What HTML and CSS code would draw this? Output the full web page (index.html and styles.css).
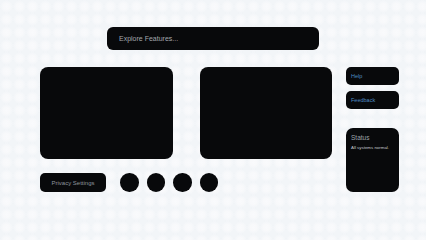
FILE: index.html
```html
<!DOCTYPE html>
<html>
<head>
<meta charset="utf-8">
<link rel="stylesheet" href="styles.css">
</head>
<body>
<div class="page">
  <div class="search">Explore Features...</div>
  <div class="main">
    <div class="content">
      <div class="panels">
        <div class="panel p1"></div>
        <div class="panel p2"></div>
      </div>
      <div class="controls">
        <div class="privacy">Privacy Settings</div>
        <div class="dots">
          <span class="dot"></span>
          <span class="dot"></span>
          <span class="dot"></span>
          <span class="dot"></span>
        </div>
      </div>
    </div>
    <div class="side">
      <div class="link">Help</div>
      <div class="link">Feedback</div>
      <div class="status">
        <div class="status-title">Status</div>
        <div class="status-text">All systems normal.</div>
      </div>
    </div>
  </div>
</div>
</body>
</html>
```
FILE: styles.css
```css
html, body {
  margin: 0;
  padding: 0;
}
body {
  width: 426px;
  height: 240px;
  overflow: hidden;
  font-family: "Liberation Sans", Arial, sans-serif;
  background-color: #f2f5f8;
  background-image: radial-gradient(circle at center, #f9fafc 0, #f8f9fb 30%, rgba(242,245,248,0) 70%);
  background-size: 13px 13px;
}
.page {
  display: flex;
  flex-direction: column;
  padding-top: 27px;
}
.search {
  align-self: center;
  width: 200px;
  height: 23px;
  padding-left: 12px;
  background: #08090b;
  border-radius: 6px;
  color: #a3a7ad;
  font-size: 7px;
  display: flex;
  align-items: center;
}
.main {
  display: flex;
  gap: 14px;
  padding-left: 40px;
  margin-top: 17px;
}
.content {
  display: flex;
  flex-direction: column;
  gap: 14px;
}
.panels {
  display: flex;
  gap: 27px;
}
.panel {
  height: 92px;
  background: #08090b;
  border-radius: 8px;
}
.p1 { width: 133px; }
.p2 { width: 132px; }
.controls {
  display: flex;
  align-items: center;
  gap: 14px;
}
.privacy {
  width: 66px;
  height: 19px;
  border-radius: 5px;
  background: #08090b;
  color: #8d949c;
  font-size: 6px;
  display: flex;
  align-items: center;
  justify-content: center;
}
.dots {
  display: flex;
  gap: 8px;
}
.dot {
  width: 18.5px;
  height: 18.5px;
  border-radius: 50%;
  background: #08090b;
}
.side {
  width: 53px;
  display: flex;
  flex-direction: column;
}
.link {
  height: 18px;
  border-radius: 5px;
  background: #08090b;
  color: #4e8cc2;
  font-size: 5.5px;
  padding-left: 5px;
  display: flex;
  align-items: center;
  margin-bottom: 6px;
}
.status {
  margin-top: 13px;
  height: 64px;
  border-radius: 7px;
  background: #08090b;
  padding: 6px 5px;
  box-sizing: border-box;
}
.status-title {
  color: #9ca2a9;
  font-size: 6.5px;
}
.status-text {
  margin-top: 4px;
  color: #c3c7cc;
  font-size: 4.4px;
}
```
